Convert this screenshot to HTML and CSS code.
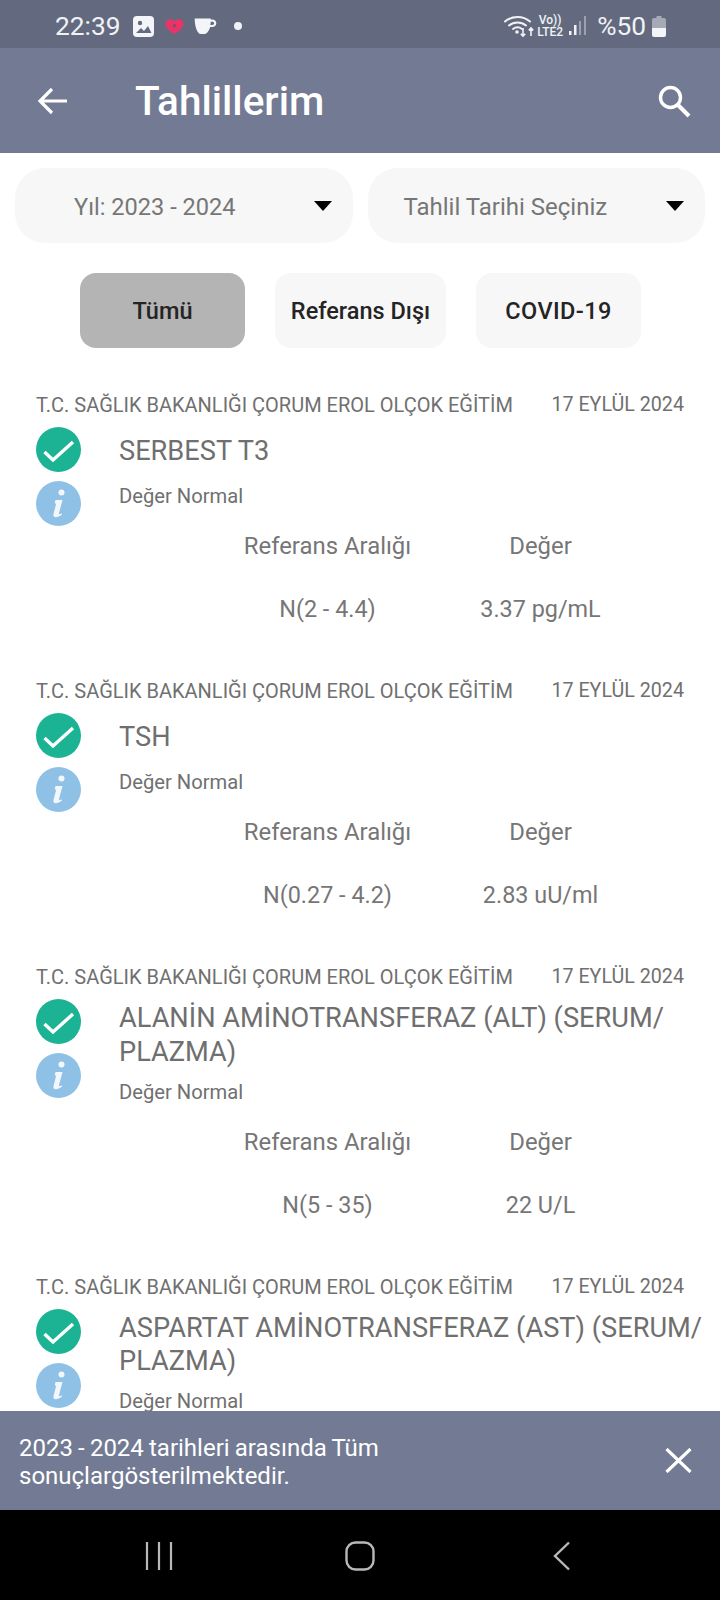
FILE: index.html
```html
<!DOCTYPE html>
<html lang="tr">
<head>
<meta charset="utf-8">
<title>Tahlillerim</title>
<link rel="stylesheet" href="styles.css">
</head>
<body>
<div class="page">
  <div class="status">
    <div class="status-left">
      <span class="clock">22:39</span>
      <svg class="ic-pic" viewBox="0 0 21 21"><rect width="21" height="21" rx="4" fill="#f4f5f8"/><circle cx="7" cy="7" r="2.200" fill="#646b80"/><path d="M3 17l5-5 3 3 4-5 3.500 7z" fill="#646b80"/></svg>
      <svg class="ic-heart" viewBox="0 0 20 16"><path d="M10 16C4 12 .5 9 .5 5.200.5 2.300 2.800.3 5.300.3 7.200.3 9 1.200 10 2.800 11 1.200 12.800.3 14.700.3c2.500 0 4.800 2 4.800 4.900C19.500 9 16 12 10 16z" fill="#ea3468"/><circle cx="10" cy="7" r="2" fill="#8a4a70"/></svg>
      <svg class="ic-cup" viewBox="0 0 24 17"><path d="M.5 .5h17v1h1.500c2.700 0 4.500 1.800 4.500 4s-1.800 4-4.500 4h-2c-1.500 4.500-3.500 7.500-6.500 7.500H7C3 17 .5 8 .5 .5zM17.500 4c0 1.300-.1 2.500-.3 3.500H19c1.300 0 2.200-.8 2.200-1.800S20.300 4 19 4z" fill="#f4f5f8"/></svg>
      <span class="dot"></span>
    </div>
    <div class="status-right">
      <svg class="ic-wifi" viewBox="0 0 31 22"><g fill="none" stroke="#f1f2f5" stroke-width="2" stroke-linecap="round"><path d="M1 6.500C8 .5 19 .5 26 6.500"/><path d="M5 10.500c5-4 12-4 17 0"/><path d="M9 14c3-2.200 6-2.200 9 0"/></g><circle cx="13" cy="17" r="1.800" fill="#f1f2f5"/><path d="M19 13v8M16.800 18.800l2.200 2.400 2.200-2.400M27 21v-8M24.800 15.400l2.200-2.400 2.200 2.400" fill="none" stroke="#f1f2f5" stroke-width="1.600"/></svg>
      <div class="net"><span>Vo))</span><span>LTE2</span></div>
      <svg class="ic-sig" viewBox="0 0 17 20"><rect x="0" y="15" width="2.500" height="4" fill="#f1f2f5"/><rect x="5" y="9" width="2.500" height="10" fill="#f1f2f5"/><rect x="10" y="5" width="2" height="14" fill="#9ba0ae"/><rect x="15" y="0" width="2" height="19" fill="#9ba0ae"/></svg>
      <span class="batt-text">%50</span>
      <svg class="ic-batt" viewBox="0 0 14 21"><path d="M4.500 0h5v2h2.500a2 2 0 0 1 2 2v8H0V4a2 2 0 0 1 2-2h2.500z" fill="#a6aab7"/><path d="M0 12h14v7a2 2 0 0 1-2 2H2a2 2 0 0 1-2-2z" fill="#f4f5f8"/></svg>
    </div>
  </div>

  <header class="appbar">
    <svg class="ic-back" viewBox="0 0 32 28"><path d="M30 14H3M15 2L3 14l12 12" fill="none" stroke="#fff" stroke-width="3.200"/></svg>
    <h1 class="title">Tahlillerim</h1>
    <svg class="ic-search" viewBox="0 0 34 34"><circle cx="13.500" cy="13.500" r="10" fill="none" stroke="#fff" stroke-width="3.400"/><path d="M21 21l11 11" stroke="#fff" stroke-width="4"/></svg>
  </header>

  <div class="filters">
    <div class="select"><span class="select-label year">Yıl: 2023 - 2024</span><span class="caret"></span></div>
    <div class="select"><span class="select-label">Tahlil Tarihi Seçiniz</span><span class="caret"></span></div>
  </div>

  <div class="tabs">
    <div class="tab tab-all active">Tümü</div>
    <div class="tab tab-ref">Referans Dışı</div>
    <div class="tab tab-cov">COVID-19</div>
  </div>

  <main class="list">
    <article class="item">
      <div class="item-head"><span class="hosp">T.C. SAĞLIK BAKANLIĞI ÇORUM EROL OLÇOK EĞİTİM</span><span class="date">17 EYLÜL 2024</span></div>
      <div class="item-body">
        <div class="icons">
          <svg class="ic-ok" viewBox="0 0 45 45"><circle cx="22.500" cy="22.500" r="22.500" fill="#1bb394"/><path d="M8.500 25l8.500 8L37 15" fill="none" stroke="#fff" stroke-width="3.400"/></svg>
          <svg class="ic-info" viewBox="0 0 45 45"><circle cx="22.500" cy="22.500" r="22.500" fill="#8fc1e6"/><circle cx="25.500" cy="11.500" r="3" fill="#f2f7fc"/><path d="M19.500 19h7l-3.500 13c-.3 1.300.5 1.600 2.500.3l.5 1.200c-2.500 2-4.500 2.700-6 2.700-2 0-3-1.100-2.500-3.300l2.700-10.500-1.500.1z" fill="#f2f7fc"/></svg>
        </div>
        <div class="texts"><div class="name"><span>SERBEST T3</span></div><div class="state">Değer Normal</div></div>
      </div>
      <div class="table"><span class="cell">Referans Aralığı</span><span class="cell">Değer</span><span class="cell val">N(2 - 4.4)</span><span class="cell val">3.37 pg/mL</span></div>
    </article>

    <article class="item">
      <div class="item-head"><span class="hosp">T.C. SAĞLIK BAKANLIĞI ÇORUM EROL OLÇOK EĞİTİM</span><span class="date">17 EYLÜL 2024</span></div>
      <div class="item-body">
        <div class="icons">
          <svg class="ic-ok" viewBox="0 0 45 45"><circle cx="22.500" cy="22.500" r="22.500" fill="#1bb394"/><path d="M8.500 25l8.500 8L37 15" fill="none" stroke="#fff" stroke-width="3.400"/></svg>
          <svg class="ic-info" viewBox="0 0 45 45"><circle cx="22.500" cy="22.500" r="22.500" fill="#8fc1e6"/><circle cx="25.500" cy="11.500" r="3" fill="#f2f7fc"/><path d="M19.500 19h7l-3.500 13c-.3 1.300.5 1.600 2.500.3l.5 1.200c-2.500 2-4.500 2.700-6 2.700-2 0-3-1.100-2.500-3.300l2.700-10.500-1.500.1z" fill="#f2f7fc"/></svg>
        </div>
        <div class="texts"><div class="name"><span>TSH</span></div><div class="state">Değer Normal</div></div>
      </div>
      <div class="table"><span class="cell">Referans Aralığı</span><span class="cell">Değer</span><span class="cell val">N(0.27 - 4.2)</span><span class="cell val">2.83 uU/ml</span></div>
    </article>

    <article class="item">
      <div class="item-head"><span class="hosp">T.C. SAĞLIK BAKANLIĞI ÇORUM EROL OLÇOK EĞİTİM</span><span class="date">17 EYLÜL 2024</span></div>
      <div class="item-body">
        <div class="icons">
          <svg class="ic-ok" viewBox="0 0 45 45"><circle cx="22.500" cy="22.500" r="22.500" fill="#1bb394"/><path d="M8.500 25l8.500 8L37 15" fill="none" stroke="#fff" stroke-width="3.400"/></svg>
          <svg class="ic-info" viewBox="0 0 45 45"><circle cx="22.500" cy="22.500" r="22.500" fill="#8fc1e6"/><circle cx="25.500" cy="11.500" r="3" fill="#f2f7fc"/><path d="M19.500 19h7l-3.500 13c-.3 1.300.5 1.600 2.500.3l.5 1.200c-2.500 2-4.500 2.700-6 2.700-2 0-3-1.100-2.500-3.300l2.700-10.500-1.500.1z" fill="#f2f7fc"/></svg>
        </div>
        <div class="texts"><div class="name"><span>ALANİN AMİNOTRANSFERAZ (ALT) (SERUM/<br>PLAZMA)</span></div><div class="state">Değer Normal</div></div>
      </div>
      <div class="table"><span class="cell">Referans Aralığı</span><span class="cell">Değer</span><span class="cell val">N(5 - 35)</span><span class="cell val">22 U/L</span></div>
    </article>

    <article class="item">
      <div class="item-head"><span class="hosp">T.C. SAĞLIK BAKANLIĞI ÇORUM EROL OLÇOK EĞİTİM</span><span class="date">17 EYLÜL 2024</span></div>
      <div class="item-body">
        <div class="icons">
          <svg class="ic-ok" viewBox="0 0 45 45"><circle cx="22.500" cy="22.500" r="22.500" fill="#1bb394"/><path d="M8.500 25l8.500 8L37 15" fill="none" stroke="#fff" stroke-width="3.400"/></svg>
          <svg class="ic-info" viewBox="0 0 45 45"><circle cx="22.500" cy="22.500" r="22.500" fill="#8fc1e6"/><circle cx="25.500" cy="11.500" r="3" fill="#f2f7fc"/><path d="M19.500 19h7l-3.500 13c-.3 1.300.5 1.600 2.500.3l.5 1.200c-2.500 2-4.500 2.700-6 2.700-2 0-3-1.100-2.500-3.300l2.700-10.500-1.500.1z" fill="#f2f7fc"/></svg>
        </div>
        <div class="texts"><div class="name"><span>ASPARTAT AMİNOTRANSFERAZ (AST) (SERUM/<br>PLAZMA)</span></div><div class="state">Değer Normal</div></div>
      </div>
    </article>
  </main>

  <div class="snack">
    <p class="snack-text">2023 - 2024 tarihleri arasında Tüm<br>sonuçlargösterilmektedir.</p>
    <svg class="ic-close" viewBox="0 0 27 25"><path d="M1.500 1l24 23M25.500 1l-24 23" stroke="#fff" stroke-width="3.200"/></svg>
  </div>

  <nav class="navbar">
    <svg class="ic-recent" viewBox="0 0 28 28"><path d="M2 0v28M14 0v28M26 0v28" stroke="#b8b8b8" stroke-width="2.200"/></svg>
    <svg class="ic-home" viewBox="0 0 30 30"><rect x="1.500" y="1.500" width="27" height="27" rx="9" fill="none" stroke="#b8b8b8" stroke-width="2.400"/></svg>
    <svg class="ic-tri" viewBox="0 0 18 30"><path d="M16 1.500L2 15l14 13.500" fill="none" stroke="#b8b8b8" stroke-width="2.400"/></svg>
  </nav>
</div>
</body>
</html>
```

FILE: styles.css
```css
* { box-sizing: border-box; }
html, body { margin: 0; padding: 0; background: #fff; }
body { font-family: Roboto, "Noto Sans", sans-serif; color: #707070; }
.page { width: 720px; height: 1600px; display: flex; flex-direction: column; overflow: hidden; }

.status { height: 48px; background: #636a7f; color: #f1f2f5; display: flex; justify-content: space-between; align-items: center; padding: 4px 54px 0 55px; flex: none; }
.status-left, .status-right { display: flex; align-items: center; }
.clock { font-size: 26.300px; margin-right: 12px; }
.ic-pic { width: 21px; height: 21px; margin-right: 11px; }
.ic-heart { width: 19px; height: 15px; margin-right: 10px; }
.ic-cup { width: 23px; height: 16px; margin-right: 17px; }
.dot { width: 8px; height: 8px; border-radius: 50%; background: #f1f2f5; }
.ic-wifi { width: 31px; height: 22px; margin-right: 2px; }
.net { display: flex; flex-direction: column; width: 26px; font-size: 12px; line-height: 12px; font-weight: 500; text-align: center; margin-right: 6px; white-space: nowrap; }
.ic-sig { width: 17px; height: 20px; margin-right: 11px; }
.batt-text { font-size: 26.300px; margin-right: 6px; }
.ic-batt { width: 14px; height: 21px; }

.appbar { height: 105px; flex: none; background: #727a94; display: flex; align-items: center; padding: 0 29px 0 37px; color: #fff; }
.ic-back { width: 32px; height: 28px; flex: none; }
.title { flex: 1; margin: 2px 0 0 66px; font-size: 40.500px; font-weight: 500; line-height: 1; }
.ic-search { width: 34px; height: 34px; flex: none; }

.filters { display: flex; gap: 15px; padding: 15px 15px 0; flex: none; }
.select { width: 338px; height: 75px; background: #f7f7f7; border-radius: 30px; display: flex; align-items: center; position: relative; font-size: 24px; color: #767676; }
.select-label { flex: 1; padding: 2px 36px 0; }
.select-label.year { padding-left: 59px; font-size: 23.600px; }
.caret { position: absolute; right: 21px; top: 33px; width: 0; height: 0; border-left: 9.500px solid transparent; border-right: 9.500px solid transparent; border-top: 10px solid #000; }

.tabs { display: flex; gap: 30px; padding: 30px 0 0 80px; flex: none; }
.tab { height: 75px; background: #f7f7f7; border-radius: 16px; display: flex; align-items: center; justify-content: center; font-size: 23.500px; font-weight: 500; color: #242424; }
.tab.active { background: #b4b4b4; }
.tab-all { width: 165px; }
.tab-ref { width: 171px; }
.tab-cov { width: 165px; letter-spacing: 0.400px; }

.list { flex: 1; min-height: 0; overflow: hidden; padding: 45px 0 0 36px; }
.item { padding-bottom: 55px; }
.item-head { display: flex; justify-content: space-between; padding-right: 36px; font-size: 20px; line-height: 24px; }
.date { font-size: 19.700px; }
.item-body { display: flex; margin-top: 10px; }
.icons { width: 45px; flex: none; display: flex; flex-direction: column; gap: 9px; margin-bottom: -30px; }
.ic-ok, .ic-info { width: 45px; height: 45px; display: block; flex: none; }
.texts { margin-left: 38px; padding-top: 3px; }
.name { min-height: 43.500px; display: flex; align-items: center; font-size: 27.200px; line-height: 33.500px; color: #6f6f6f; white-space: nowrap; }
.state { font-size: 20.200px; line-height: 24px; margin-top: 10.500px; }
.table { display: grid; grid-template-columns: 227px 199px; grid-auto-rows: 30px; row-gap: 33px; padding-left: 178px; margin-top: 23px; font-size: 23.900px; color: #767676; align-items: center; }
.cell { text-align: center; white-space: nowrap; }
.cell.val { font-size: 23.400px; }

.snack { height: 99px; flex: none; background: #727a94; color: #fff; display: flex; align-items: center; justify-content: space-between; padding: 3px 28px 0 19px; }
.snack-text { margin: 0; font-size: 24px; line-height: 28px; word-spacing: -0.800px; }
.ic-close { width: 27px; height: 25px; margin-top: -3px; }

.navbar { height: 90px; flex: none; background: #000; display: flex; align-items: center; padding: 2px 0 0 145px; }
.ic-recent { width: 28px; height: 28px; }
.ic-home { width: 30px; height: 30px; margin-left: 172px; }
.ic-tri { width: 18px; height: 30px; margin-left: 178px; }
```
